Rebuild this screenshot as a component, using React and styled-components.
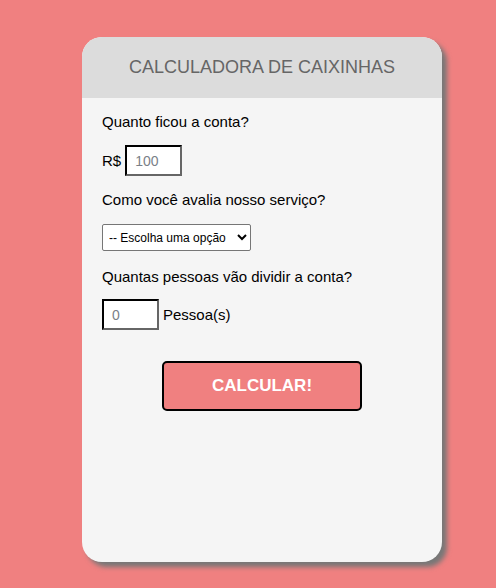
import React from "react";
import styled, { createGlobalStyle } from "styled-components";

const GlobalStyle = createGlobalStyle`
	html, body {
		margin: 0;
		padding: 0;
		background-color: #f08080;
		font-family: "Liberation Sans", Arial, sans-serif;
	}
`;

const Page = styled.div`
	min-height: 588px;
	padding: 37px 0 0 82px;
	box-sizing: border-box;
`;

const Card = styled.div`
	width: 360px;
	height: 525px;
	background-color: #f5f5f5;
	border-radius: 20px;
	box-shadow: 5px 5px 5px #777;
	overflow: hidden;
	display: flex;
	flex-direction: column;
`;

const Header = styled.h1`
	margin: 0;
	height: 61px;
	background-color: #dcdcdc;
	display: flex;
	align-items: center;
	justify-content: center;
	font-size: 18px;
	font-weight: normal;
	color: #666;
	padding-bottom: 1px;
	box-sizing: border-box;
`;

const Body = styled.form`
	padding: 15px 20px 0 20px;
	display: flex;
	flex-direction: column;
`;

const Label = styled.p`
	margin: ${(p) => p.$top || 0}px 0 0 0;
	font-size: 15px;
	line-height: 18px;
	color: #000;
`;

const Row = styled.div`
	display: flex;
	align-items: center;
	gap: ${(p) => p.$gap || 4}px;
	margin-top: ${(p) => p.$top || 0}px;
	font-size: 15px;
	color: #000;
`;

const Input = styled.input`
	width: 57px;
	height: 31px;
	box-sizing: border-box;
	border: 2px inset #555;
	border-top-color: #333;
	border-left-color: #333;
	border-right-color: #666;
	border-bottom-color: #666;
	background: #fff;
	padding: 0 8px;
	font-family: "Liberation Sans", Arial, sans-serif;
	font-size: 14px;
	outline: none;
	&::placeholder {
		color: #7a7f88;
	}
`;

const Select = styled.select`
	width: 149px;
	height: 27px;
	margin-top: 15px;
	font-family: "Liberation Sans", Arial, sans-serif;
	font-size: 12px;
	color: #000;
	background: #fff;
	border: 1px solid #767676;
	border-radius: 2px;
	padding: 0 0 0 2px;
`;

const ButtonRow = styled.div`
	display: flex;
	justify-content: center;
	margin-top: 31px;
`;

const Button = styled.button`
	width: 200px;
	height: 50px;
	background-color: #f08080;
	color: #fff;
	font-family: "Liberation Sans", Arial, sans-serif;
	font-size: 17px;
	font-weight: bold;
	border: 2px solid #000;
	border-radius: 5px;
	cursor: pointer;
`;

export default function App() {
	return (
		<>
			<GlobalStyle />
			<Page>
				<Card>
					<Header>CALCULADORA DE CAIXINHAS</Header>
					<Body onSubmit={(e) => e.preventDefault()}>
						<Label>Quanto ficou a conta?</Label>
						<Row $top={14}>
							<span>R$</span>
							<Input type='text' placeholder='100' />
						</Row>
						<Label $top={15}>Como você avalia nosso serviço?</Label>
						<Select defaultValue=''>
							<option value=''>-- Escolha uma opção</option>
							<option value='0.3'>30% - Muito bom</option>
							<option value='0.1'>10% - Bom</option>
							<option value='0.05'>5% - Ruim</option>
						</Select>
						<Label $top={17}>Quantas pessoas vão dividir a conta?</Label>
						<Row $top={13}>
							<Input type='text' placeholder='0' />
							<span>Pessoa(s)</span>
						</Row>
						<ButtonRow>
							<Button type='submit'>CALCULAR!</Button>
						</ButtonRow>
					</Body>
				</Card>
			</Page>
		</>
	);
}
